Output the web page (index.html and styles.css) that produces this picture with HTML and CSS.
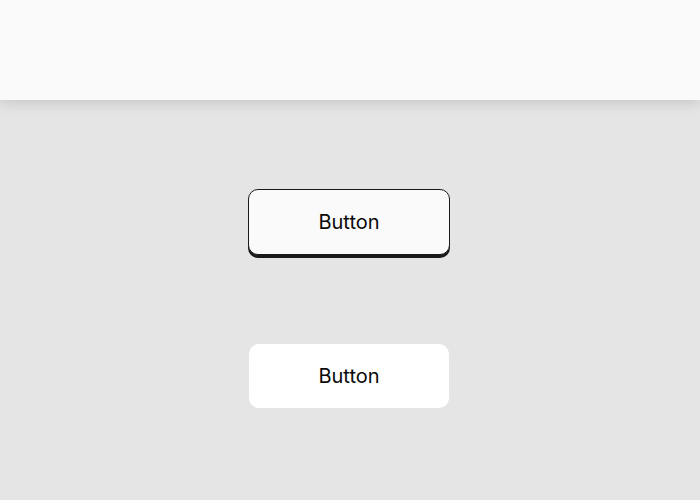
FILE: index.html
```html
<!DOCTYPE html>
<html lang="en">
<head>
    <meta charset="UTF-8">
    <meta name="viewport" content="width=device-width, initial-scale=1.0">
    <title>Buttons</title>
    <link rel="stylesheet" href="styles.css">
</head>
<body>
    <header class="topbar"></header>
    <main class="stage">
        <button class="btn btn-outline">Button</button>
        <button class="btn btn-plain">Button</button>
    </main>
</body>
</html>
```

FILE: styles.css
```css
html, body {
    height: 100%;
}
body {
    margin: 0;
    background-color: #e5e5e5;
    font-family: Inter, "Noto Sans", sans-serif;
    overflow: hidden;
}
.topbar {
    position: relative;
    z-index: 1;
    height: 100px;
    background-color: #fafafa;
    box-shadow: 0 4px 12px rgba(0, 0, 0, 0.12);
}
.stage {
    display: flex;
    flex-direction: column;
    align-items: center;
    gap: 89px;
    padding-top: 89px;
    padding-right: 2px;
}
.btn {
    width: 200px;
    height: 64px;
    font-family: Inter, "Noto Sans", sans-serif;
    font-size: 20px;
    color: #0a0a0a;
    border-radius: 10px;
    cursor: pointer;
    box-sizing: content-box;
    padding: 0;
}
.btn-outline {
    background-color: #fafafa;
    border: 1px solid #1a1a1a;
    box-shadow: 0 3px 0 #1a1a1a;
}
.btn-plain {
    background-color: #ffffff;
    border: none;
}
```
